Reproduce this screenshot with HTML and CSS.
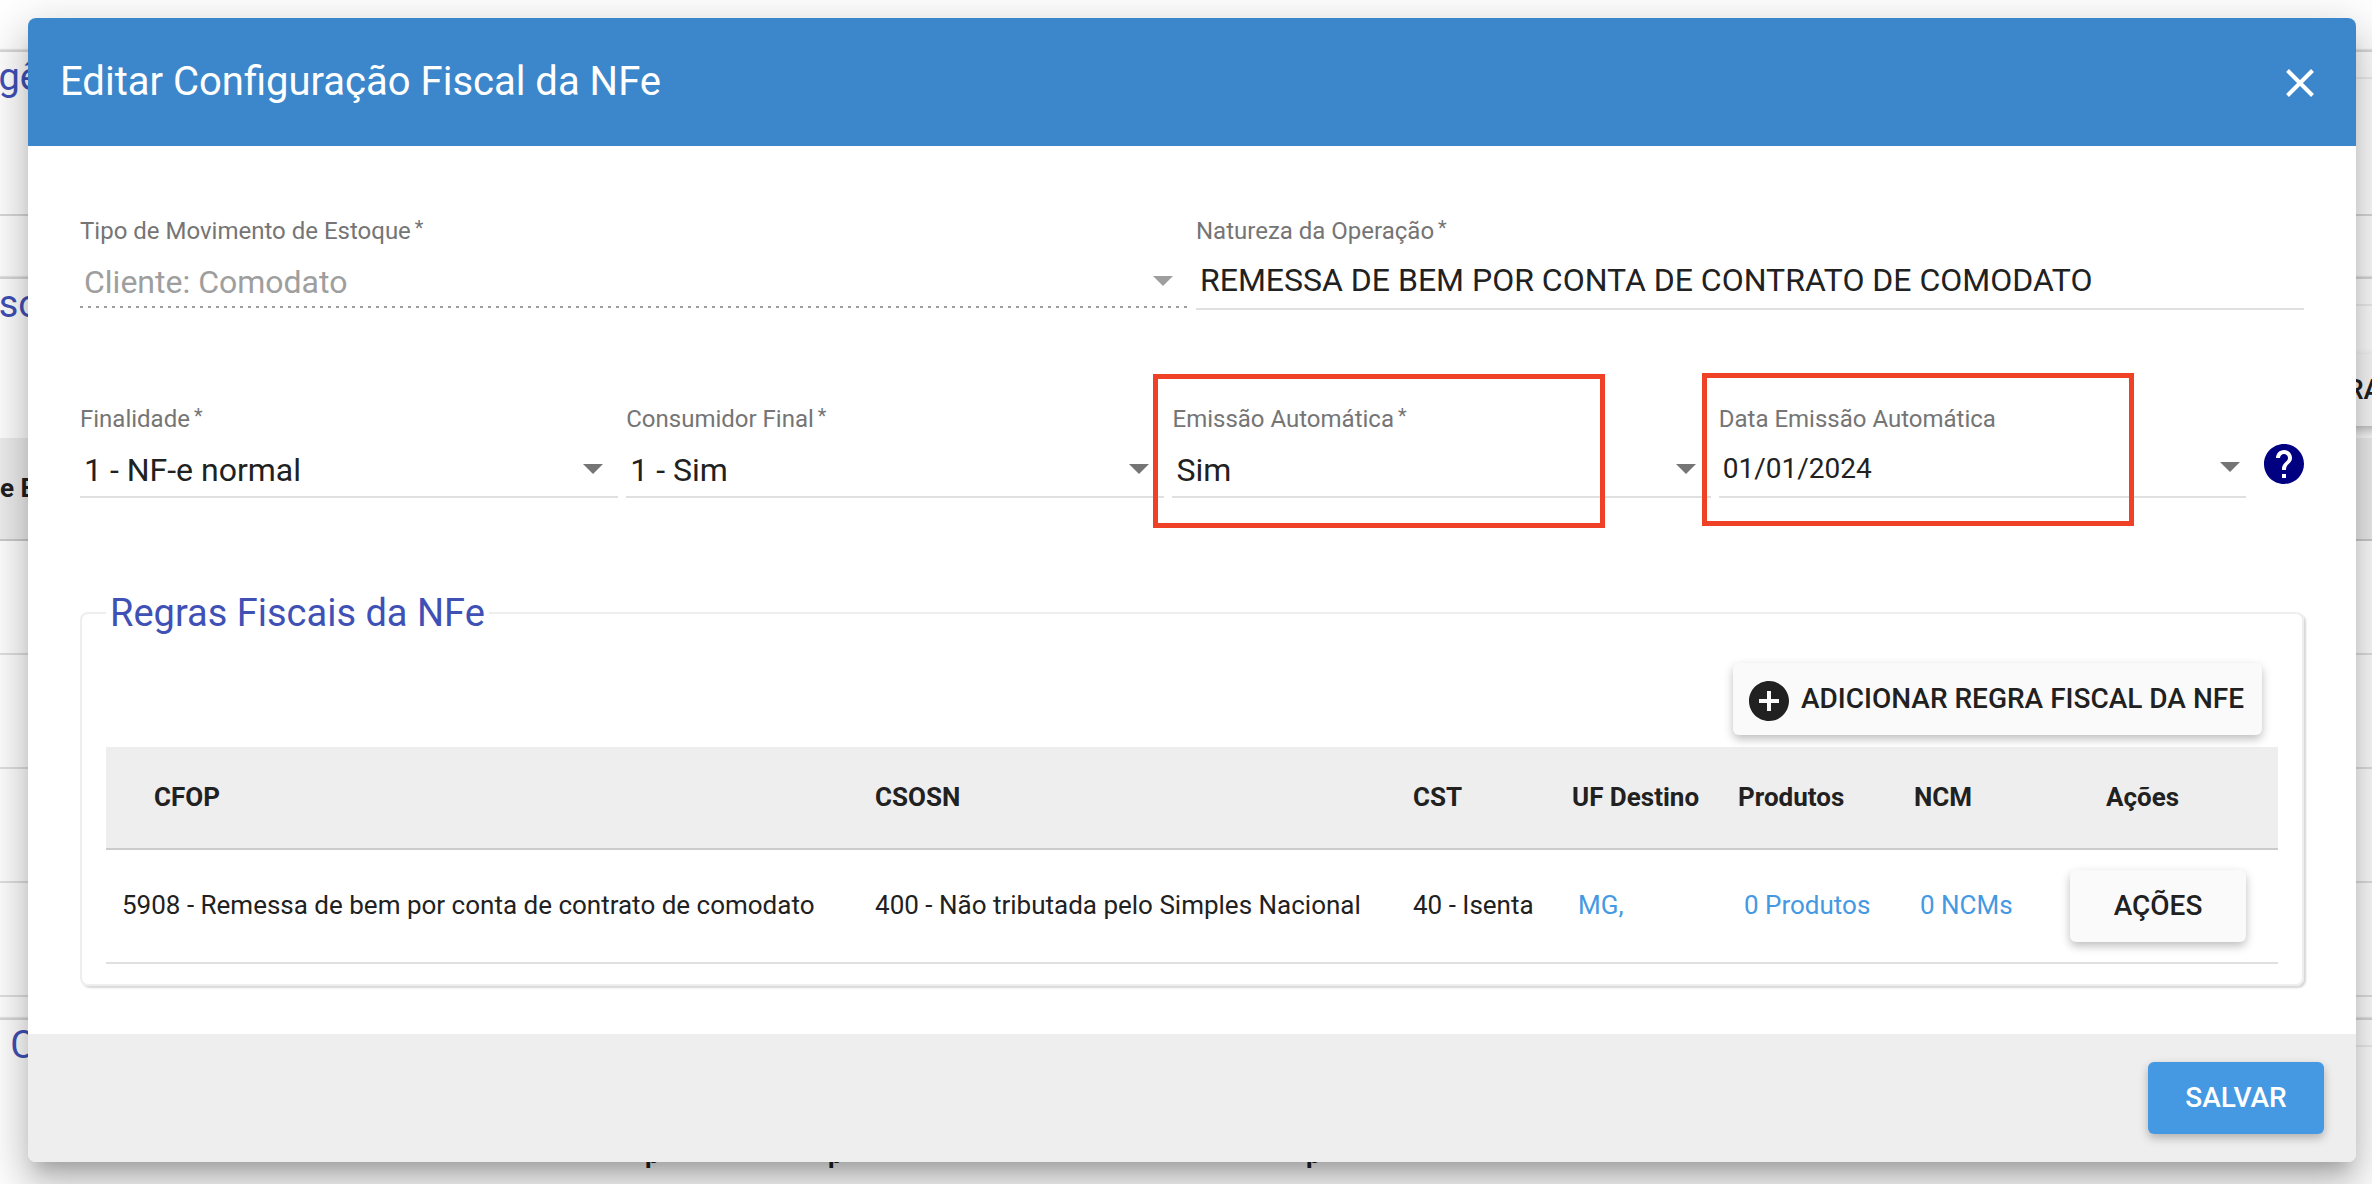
FILE: index.html
```html
<!DOCTYPE html>
<html lang="pt-BR">
<head>
  <meta charset="utf-8">
  <meta name="viewport" content="width=device-width, initial-scale=1">
  <title>Editar Configuração Fiscal da NFe</title>
  <link rel="stylesheet" href="styles.css">
</head>
<body>
  <div class="page" aria-hidden="true">
    <section class="card">
      <div class="group">
        <span class="group-title">gê</span>
        <div class="group-line"></div>
      </div>
    </section>
    <section class="card">
      <div class="group">
        <span class="group-title">so</span>
        <div class="group-action">RA</div>
        <div class="group-head">e E</div>
        <div class="group-row"></div>
        <div class="group-row"></div>
        <div class="group-row"></div>
        <div class="group-row"></div>
      </div>
    </section>
    <section class="card">
      <div class="group">
        <span class="group-title group-title-inset">C</span>
        <div class="group-columns"><span>p</span><span>p</span><span>p</span></div>
      </div>
    </section>
  </div>

  <main class="dialog" role="dialog" aria-labelledby="dialog-title">
    <header class="dialog-header">
      <h1 class="dialog-title" id="dialog-title">Editar Configuração Fiscal da NFe</h1>
      <button class="close" type="button" aria-label="Fechar">
        <svg width="28" height="28" viewBox="0 0 28 28"><path d="M1.500 1.500L26.500 26.500M26.500 1.500L1.500 26.500" stroke="#fff" stroke-width="4"/></svg>
      </button>
    </header>

    <form class="dialog-form">
      <div class="dialog-body">
        <div class="row row-two">
          <div class="field">
            <label class="label" for="tipo">Tipo de Movimento de Estoque<span class="star">*</span></label>
            <div class="control">
              <select class="input select" id="tipo" disabled><option>Cliente: Comodato</option></select>
              <svg class="arrow arrow-disabled" width="20" height="10" viewBox="0 0 20 10"><path d="M0 0H20L10 10Z"/></svg>
            </div>
          </div>
          <div class="field">
            <label class="label" for="natureza">Natureza da Operação<span class="star">*</span></label>
            <input class="input" id="natureza" type="text" value="REMESSA DE BEM POR CONTA DE CONTRATO DE COMODATO">
          </div>
        </div>

        <div class="row row-four">
          <div class="field">
            <label class="label" for="finalidade">Finalidade<span class="star">*</span></label>
            <div class="control">
              <select class="input select" id="finalidade"><option>1 - NF-e normal</option></select>
              <svg class="arrow" width="20" height="10" viewBox="0 0 20 10"><path d="M0 0H20L10 10Z"/></svg>
            </div>
          </div>
          <div class="field">
            <label class="label" for="consumidor">Consumidor Final<span class="star">*</span></label>
            <div class="control">
              <select class="input select" id="consumidor"><option>1 - Sim</option></select>
              <svg class="arrow" width="20" height="10" viewBox="0 0 20 10"><path d="M0 0H20L10 10Z"/></svg>
            </div>
          </div>
          <div class="field">
            <label class="label" for="emissao">Emissão Automática<span class="star">*</span></label>
            <div class="control">
              <select class="input select" id="emissao"><option>Sim</option></select>
              <svg class="arrow" width="20" height="10" viewBox="0 0 20 10"><path d="M0 0H20L10 10Z"/></svg>
            </div>
            <span class="mark mark-emissao"></span>
          </div>
          <div class="field">
            <label class="label" for="data">Data Emissão Automática</label>
            <div class="control">
              <input class="input input-date" id="data" type="text" value="01/01/2024">
              <svg class="arrow arrow-date" width="20" height="10" viewBox="0 0 20 10"><path d="M0 0H20L10 10Z"/></svg>
            </div>
            <span class="mark mark-data"></span>
          </div>
          <button class="help" type="button" aria-label="Ajuda">
            <svg width="40" height="40" viewBox="2 2 20 20"><path fill="#000080" d="M12 2C6.480 2 2 6.480 2 12s4.480 10 10 10 10-4.480 10-10S17.520 2 12 2zm1 17h-2v-2h2v2zm2.070-7.750l-.9.920C13.450 12.900 13 13.500 13 15h-2v-.5c0-1.100.450-2.100 1.170-2.830l1.240-1.260c.370-.360.590-.860.590-1.410 0-1.100-.9-2-2-2s-2 .9-2 2H8c0-2.210 1.790-4 4-4s4 1.790 4 4c0 .880-.360 1.680-.930 2.250z"/></svg>
          </button>
        </div>

        <fieldset class="rules">
          <legend class="rules-title">Regras Fiscais da NFe</legend>
          <div class="rules-actions">
            <button class="button button-add" type="button">
              <svg width="40" height="40" viewBox="2 2 20 20"><path fill="#212121" d="M12 2C6.480 2 2 6.480 2 12s4.480 10 10 10 10-4.480 10-10S17.520 2 12 2zm5 11h-4v4h-2v-4H7v-2h4V7h2v4h4v2z"/></svg>
              <span>ADICIONAR REGRA FISCAL DA NFE</span>
            </button>
          </div>
          <table class="table">
            <colgroup>
              <col class="col-cfop"><col><col class="col-cst"><col class="col-uf"><col class="col-produtos"><col class="col-ncm"><col class="col-acoes">
            </colgroup>
            <thead>
              <tr><th class="first">CFOP</th><th>CSOSN</th><th>CST</th><th>UF Destino</th><th>Produtos</th><th>NCM</th><th class="last">Ações</th></tr>
            </thead>
            <tbody>
              <tr>
                <td>5908 - Remessa de bem por conta de contrato de comodato</td>
                <td>400 - Não tributada pelo Simples Nacional</td>
                <td>40 - Isenta</td>
                <td><a class="link" href="#uf">MG,</a></td>
                <td><a class="link" href="#produtos">0 Produtos</a></td>
                <td><a class="link" href="#ncm">0 NCMs</a></td>
                <td class="cell-action"><button class="button" type="button">AÇÕES</button></td>
              </tr>
            </tbody>
          </table>
        </fieldset>
      </div>

      <footer class="dialog-footer">
        <button class="button button-primary" type="submit">SALVAR</button>
      </footer>
    </form>
  </main>
</body>
</html>
```

FILE: styles.css
```css
* {
  box-sizing: border-box;
}

html,
body {
  margin: 0;
  min-height: 100%;
}

body {
  position: relative;
  padding: 18px 16px 22px 28px;
  background: #fff;
  color: #212121;
  font-family: Roboto, "Liberation Sans", sans-serif;
  font-size: 26px;
}

button,
input,
select {
  font-family: inherit;
  color: inherit;
}

svg {
  display: block;
}

/* Page behind the dialog */
.page {
  position: absolute;
  inset: 0;
  padding-top: 50px;
  overflow: hidden;
}

.card {
  border-top: 2px solid #d8d8d8;
  padding: 25px 0;
  height: 227px;
  box-shadow: 0 -1px 1px #e8e8e8;
}

.card + .card {
  height: 741px;
}

.group {
  border-top: 2px solid #eee;
}

.group-title {
  display: block;
  width: 40px;
  margin-top: -26px;
  background: #fff;
  color: #3f51b5;
  font-size: 38px;
  line-height: 48px;
  direction: rtl;
}

.group-title-inset {
  padding-right: 5px;
}

.group-line {
  height: 115px;
  border-bottom: 2px solid #d8d8d8;
}

.group-action {
  width: 180px;
  height: 72px;
  margin: 26px -139px 0 auto;
  padding-left: 15px;
  border-radius: 4px;
  background: #fafafa;
  box-shadow: 0 4px 10px rgba(0, 0, 0, 0.26);
  font-size: 28px;
  font-weight: 500;
  line-height: 72px;
}

.group-head {
  height: 103px;
  margin-top: 12px;
  border-bottom: 2px solid #ccc;
  background: #eee;
  font-weight: 700;
  line-height: 100px;
}

.group-row {
  height: 114px;
  border-bottom: 2px solid #e0e0e0;
}

.group-columns {
  display: grid;
  grid-template-columns: 183px 478px 1fr;
  padding: 65px 0 0 645px;
  font-weight: 700;
  line-height: 40px;
}

/* Dialog */
.dialog {
  position: relative;
  overflow: hidden;
  border-radius: 8px;
  background: #fff;
  box-shadow: 0 14px 16px -8px rgba(0, 0, 0, 0.2), 0 26px 38px 4px rgba(0, 0, 0, 0.14), 0 10px 48px 8px rgba(0, 0, 0, 0.12);
}

.dialog-header {
  display: flex;
  align-items: center;
  justify-content: space-between;
  height: 128px;
  padding: 0 32px;
  background: #3c87cb;
  color: #fff;
}

.dialog-title {
  margin: 0;
  font-size: 40px;
  font-weight: 400;
  line-height: 48px;
}

.close {
  padding: 12px 10px 10px;
  border: 0;
  background: none;
}

.dialog-body {
  padding: 68px 52px 48px;
}

.row {
  display: grid;
  column-gap: 8px;
}

.row-two {
  grid-template-columns: 1fr 1fr;
  margin-bottom: 92px;
}

.row-four {
  grid-template-columns: repeat(3, 49fr) 48fr 50px;
  margin-bottom: 91px;
}

.field {
  position: relative;
  min-width: 0;
}

.label {
  display: block;
  margin-bottom: 2px;
  color: #757575;
  font-size: 24px;
  line-height: 34px;
  white-space: nowrap;
}

.star {
  margin-left: 4px;
  font-size: 20px;
  line-height: 20px;
  vertical-align: 4px;
}

.control {
  position: relative;
}

.input {
  display: block;
  width: 100%;
  height: 60px;
  padding: 2px 4px 0;
  border: 0;
  border-bottom: 2px solid #e0e0e0;
  border-radius: 0;
  outline: 0;
  background: none;
  font-size: 32px;
}

.select {
  appearance: none;
  padding-top: 5px;
}

.select:disabled {
  border-bottom-color: transparent;
  background: linear-gradient(to right, #9e9e9e 33%, transparent 0) 0 100% / 8px 2px repeat-x;
  background-origin: padding-box;
  background-clip: padding-box;
  color: #9e9e9e;
  opacity: 1;
}

.input-date {
  font-size: 28px;
}

.arrow {
  position: absolute;
  top: 26px;
  right: 15px;
  fill: #757575;
  pointer-events: none;
}

.arrow-disabled {
  fill: #9e9e9e;
}

.arrow-date {
  top: 24px;
  right: 6px;
}

.help {
  justify-self: end;
  align-self: start;
  margin-top: 42px;
  padding: 0;
  border: 0;
  background: none;
}

/* Red highlight frames drawn over the fields */
.mark {
  position: absolute;
  border: 5px solid #ee4125;
  pointer-events: none;
}

.mark-emissao {
  inset: -28px 106px -30px -19px;
}

.mark-data {
  inset: -29px 112px -28px -17px;
}

/* Rules */
.rules {
  min-width: 0;
  margin: 0;
  padding: 26px 24px 20px;
  border: 2px solid #eee;
  border-radius: 8px;
  box-shadow: 2px 2px 2px rgba(0, 0, 0, 0.16);
}

.rules-title {
  padding: 0 4px;
  background: #fff;
  color: #3f51b5;
  font-size: 38px;
  line-height: 48px;
}

.rules-actions {
  display: flex;
  justify-content: flex-end;
  padding: 0 16px 12px;
}

.button {
  display: flex;
  align-items: center;
  justify-content: center;
  min-width: 176px;
  height: 72px;
  padding: 0 12px 2px;
  border: 0;
  border-radius: 6px;
  background: #fafafa;
  box-shadow: 0 4px 10px rgba(0, 0, 0, 0.26);
  font-size: 28px;
  font-weight: 500;
  white-space: nowrap;
}

.button-add {
  gap: 12px;
  padding: 0 18px 2px 16px;
}

.button-add svg {
  margin-top: 6px;
}

.button-primary {
  background: #4499e2;
  color: #fff;
}

.table {
  width: 100%;
  table-layout: fixed;
  border-collapse: separate;
  border-spacing: 0;
}

.col-cfop {
  width: 34.67%;
}

.col-cst {
  width: 159px;
}

.col-uf {
  width: 166px;
}

.col-produtos {
  width: 176px;
}

.col-ncm {
  width: 156px;
}

.col-acoes {
  width: 224px;
}

.table th,
.table td {
  padding: 0 0 2px 16px;
  text-align: left;
  white-space: nowrap;
}

.table th {
  height: 103px;
  border-bottom: 2px solid #ccc;
  background: #eee;
  font-weight: 700;
}

.table .first {
  padding-left: 48px;
}

.table .last {
  padding-left: 52px;
}

.table td {
  height: 114px;
  border-bottom: 2px solid #e0e0e0;
}

.table .cell-action {
  padding-bottom: 0;
}

.link {
  padding-left: 6px;
  color: #4499e2;
  text-decoration: none;
}

.dialog-footer {
  display: flex;
  justify-content: flex-end;
  padding: 28px 32px;
  background: #eee;
}
```
